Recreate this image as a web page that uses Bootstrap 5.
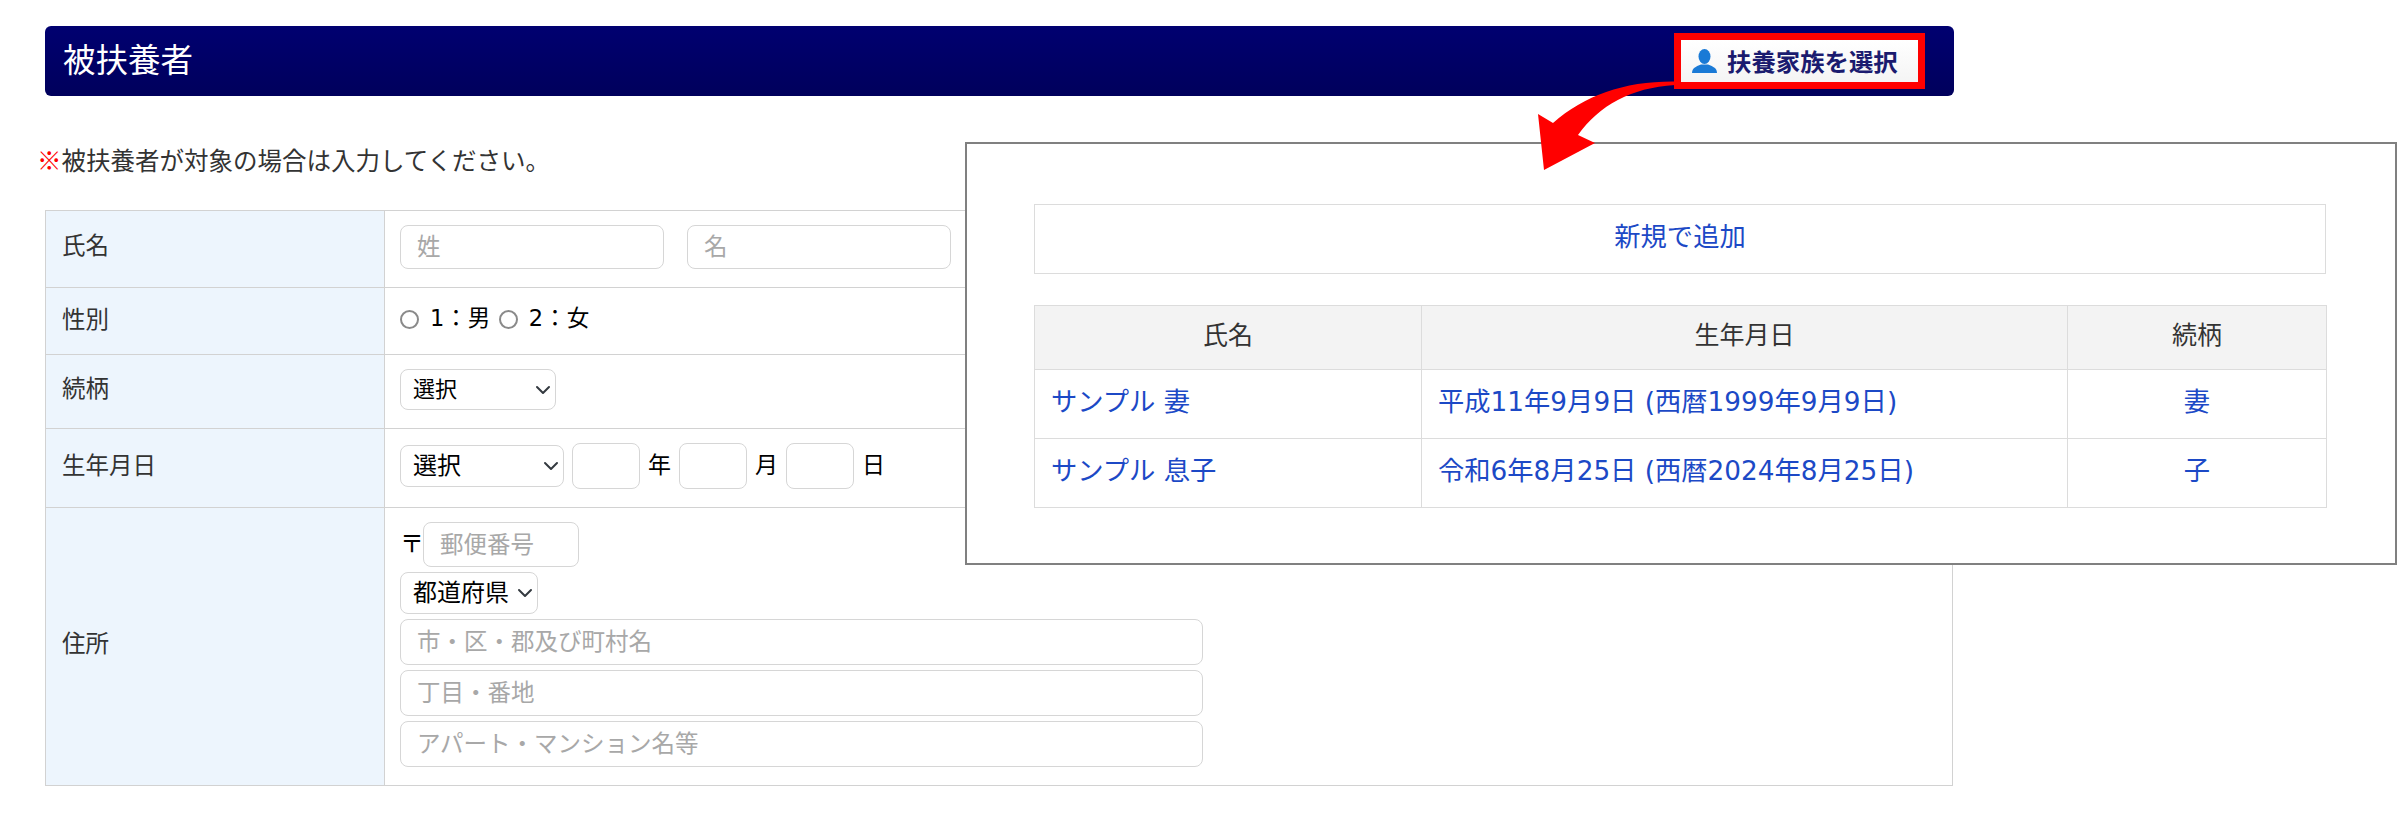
<!DOCTYPE html>
<html lang="ja">
<head>
<meta charset="utf-8">
<title>被扶養者</title>
<link href="https://cdn.jsdelivr.net/npm/bootstrap@5.3.0/dist/css/bootstrap.min.css" rel="stylesheet">
<style>
html,body{background:#fff;}
body{font-family:"DejaVu Sans","Noto Sans CJK JP",sans-serif;color:#333;font-size:24px;width:2397px;height:813px;overflow:hidden;position:relative;}
.pg{padding:26px 0 0 37px;width:1954px;}
.hd{margin-left:8px;height:70px;border-radius:6px;background:linear-gradient(#000070,#00005c);padding-left:18px;padding-right:29px;}
.hd h1{font-size:32.5px;font-weight:400;color:#fff;margin:0;line-height:1;padding-bottom:6px;font-family:"Noto Sans CJK JP",sans-serif;}
.pick{box-sizing:border-box;width:251px;height:56px;border:7px solid #f00;background:linear-gradient(#fff,#f4f4f4);color:#1b1b6f;font-weight:700;font-size:24.4px;line-height:1;padding-left:11px;gap:10px;font-family:"Noto Sans CJK JP",sans-serif;}
.note{margin:0;height:114px;padding-top:47px;line-height:34px;font-size:24.5px;color:#333;font-family:"Noto Sans CJK JP",sans-serif;}
.note span{color:#f00;}
.ftab{margin:0 0 0 8px;width:1908px;table-layout:fixed;border-collapse:collapse;}
.ftab>tbody>tr>*{border:1px solid #d2d2d2;padding:14px 15px 0;vertical-align:top;background:#fff;box-shadow:none;color:#000;}
.ftab>tbody>tr>th{background:#edf5fd;font-weight:400;color:#333;vertical-align:middle;padding:0 16px 4px;font-size:23.5px;}
.ftab>tbody>tr.r2>th{padding-bottom:0;}
.ftab>tbody>tr.r4>th{padding-bottom:2px;}
.ftab .lab{width:339px;}
.r1{height:77px;}.r2{height:67px;}.r3{height:74px;}.r4{height:79px;}.r5{height:278px;}
.form-control,.form-select{border:1px solid #d6d6d6;border-radius:8px;box-shadow:none;color:#000;}
.form-control{height:46px;padding:0 16px 4px;font-size:23.5px;font-family:"Noto Sans CJK JP",sans-serif;}
.form-control::placeholder{color:#a8a8a8;opacity:1;}
.form-select{height:42px;padding:0 0 4px 12px;font-size:22px;font-family:"Noto Sans CJK JP",sans-serif;background-position:right 4px center;background-size:16px 16px;}
.name-row{gap:23px;}
.in-name{width:264px;height:44px;}
.in-small{width:68px;flex:none;}
.in-zip{width:156px;height:45px;}
.in-wide{width:803px;}
.se-a{width:156px;height:41px;}
.se-b{width:164px;height:42px;font-size:24px;}
.se-c{width:138px;height:42px;font-size:24px;}
.sex{font-size:22.5px;letter-spacing:.5px;height:24px;margin-top:4px;}
.sex .form-check-input{width:19px;height:19px;margin:4px 11px 0 0;border:2px solid #8a8a8a;flex:none;}
.sex label{margin-right:8px;line-height:24px;}
.dt{font-size:23px;color:#000;font-family:"Noto Sans CJK JP",sans-serif;}
.dt span{padding-bottom:5px;}
.zipm{font-size:24px;width:23px;flex:none;line-height:1;padding-bottom:6px;font-family:"Noto Sans CJK JP",sans-serif;}
.addr{gap:5px;}
.pop{position:absolute;left:965px;top:142px;width:1432px;height:423px;border:2px solid #808080;background:#fff;padding:60px 0 0 67px;z-index:2;font-size:26.3px;}
.addb{width:1292px;height:70px;border:1px solid #dcdcdc;margin-bottom:31px;padding-bottom:2px;}
.pop a{color:#1c49c6;text-decoration:none;}
.ltab{width:1292px;table-layout:fixed;border-collapse:collapse;margin:0;}
.ltab>*>tr>*{border:1px solid #dcdcdc;padding:0 16px 3px;vertical-align:middle;background:#fff;box-shadow:none;}
.ltab>thead>tr>th{background:#f3f3f3;font-weight:400;color:#333;text-align:center;height:64px;font-size:25px;}
.ltab>tbody>tr>td{height:69px;}
.arw{position:absolute;left:1530px;top:75px;z-index:3;}
</style>
</head>
<body>
<div class="pg">
  <div class="hd d-flex align-items-center justify-content-between">
    <h1>被扶養者</h1>
    <div class="pick d-flex align-items-center">
      <svg width="25" height="24" viewBox="0 0 25 24"><ellipse cx="12.5" cy="7.5" rx="6" ry="7.5" fill="#1a7ad6"/><path d="M0 24C0 19.5 3.5 17.5 9 15.5L16 15.5C21.5 17.5 25 19.5 25 24Z" fill="#1a7ad6"/></svg>
      <span>扶養家族を選択</span>
    </div>
  </div>
  <p class="note"><span>※</span>被扶養者が対象の場合は入力してください。</p>
  <table class="table ftab">
    <colgroup><col class="lab"><col></colgroup>
    <tbody>
      <tr class="r1"><th>氏名</th><td><div class="d-flex name-row"><input class="form-control in-name" placeholder="姓"><input class="form-control in-name" placeholder="名"></div></td></tr>
      <tr class="r2"><th>性別</th><td><div class="sex d-flex align-items-start"><input class="form-check-input" type="radio" name="sx" id="s1"><label for="s1">1：男</label><input class="form-check-input" type="radio" name="sx" id="s2"><label for="s2">2：女</label></div></td></tr>
      <tr class="r3"><th>続柄</th><td><select class="form-select se-a"><option>選択</option></select></td></tr>
      <tr class="r4"><th>生年月日</th><td><div class="dt d-flex align-items-center"><select class="form-select se-b me-2"><option>選択</option></select><input class="form-control in-small"><span class="mx-2">年</span><input class="form-control in-small"><span class="mx-2">月</span><input class="form-control in-small"><span class="mx-2">日</span></div></td></tr>
      <tr class="r5"><th>住所</th><td><div class="d-flex flex-column align-items-start addr">
        <div class="d-flex align-items-center"><span class="zipm">〒</span><input class="form-control in-zip" placeholder="郵便番号"></div>
        <select class="form-select se-c"><option>都道府県</option></select>
        <input class="form-control in-wide" placeholder="市・区・郡及び町村名">
        <input class="form-control in-wide" placeholder="丁目・番地">
        <input class="form-control in-wide" placeholder="アパート・マンション名等">
      </div></td></tr>
    </tbody>
  </table>
</div>

<div class="pop">
  <div class="addb d-flex align-items-center justify-content-center"><a href="#">新規で追加</a></div>
  <table class="table ltab">
    <colgroup><col style="width:387px"><col style="width:646px"><col style="width:259px"></colgroup>
    <thead><tr><th>氏名</th><th>生年月日</th><th>続柄</th></tr></thead>
    <tbody>
      <tr><td><a href="#">サンプル 妻</a></td><td><a href="#">平成11年9月9日 (西暦1999年9月9日)</a></td><td class="text-center"><a href="#">妻</a></td></tr>
      <tr><td><a href="#">サンプル 息子</a></td><td><a href="#">令和6年8月25日 (西暦2024年8月25日)</a></td><td class="text-center"><a href="#">子</a></td></tr>
    </tbody>
  </table>
</div>

<svg class="arw" width="150" height="100" viewBox="1530 75 150 100"><path d="M1675 81.5C1625 81 1585 95 1553 123L1538 114L1544 170L1595 143L1578 135C1600 105 1630 88 1675 85Z" fill="#f00"/></svg>
</body>
</html>
